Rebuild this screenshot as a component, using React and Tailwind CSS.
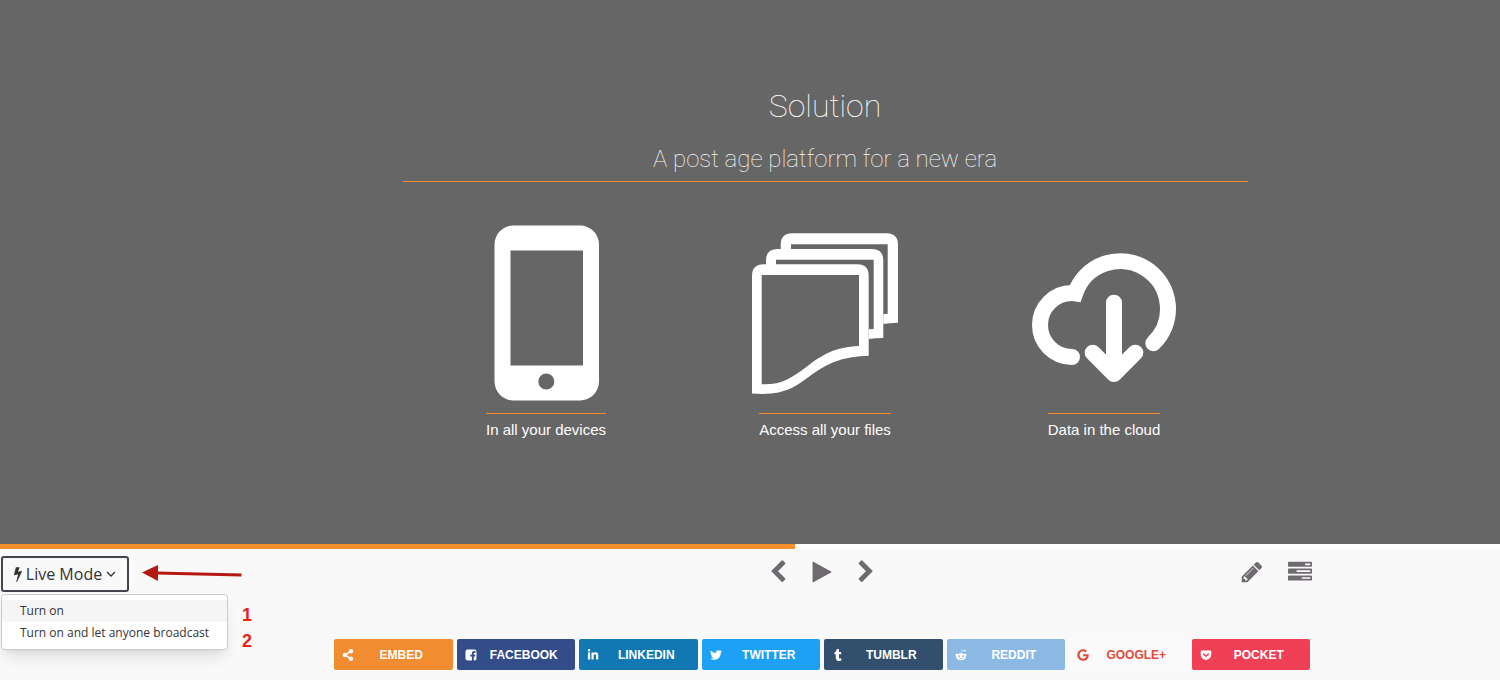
import { FaShareAlt, FaLinkedinIn, FaTwitter, FaTumblr, FaRedditAlien, FaGoogle, FaGetPocket } from "react-icons/fa";

const FacebookIcon = ({ className }) => (
  <svg viewBox="0 0 24 24" className={className} fill="currentColor" aria-hidden="true">
    <path d="M5 1h14a4 4 0 0 1 4 4v14a4 4 0 0 1-4 4h-1.500v-8h2.800l.5-3.600h-3.300V9.200c0-1.200.5-1.900 1.900-1.900h1.800V4.100c-.5-.1-1.500-.2-2.600-.2-3 0-4.800 1.800-4.800 4.700v2.800H10.500V15h3.300v8H5a4 4 0 0 1-4-4V5a4 4 0 0 1 4-4z" />
  </svg>
);

const Glyph = ({ className, d }) => (
  <svg viewBox="0 0 1792 1792" className={className} fill="currentColor" aria-hidden="true">
    <path d={d} />
  </svg>
);

const glyphs = {
  bolt: "M1333 566q18 20 7 44l-540 1157q-13 25-42 25-4 0-14-2-17-5-25.5-19t-4.5-30l197-808-406 101q-4 1-12 1-18 0-31-11-18-15-13-39l201-825q4-14 16-23t28-9h328q19 0 32 12.5t13 29.5q0 8-5 18l-171 463 396-98q8-2 12-2 19 0 34 15z",
  prev: "M1427 301l-531 531 531 531q19 19 19 45t-19 45l-166 166q-19 19-45 19t-45-19l-742-742q-19-19-19-45t19-45l742-742q19-19 45-19t45 19l166 166q19 19 19 45t-19 45z",
  next: "M1363 877l-742 742q-19 19-45 19t-45-19l-166-166q-19-19-19-45t19-45l531-531-531-531q-19-19-19-45t19-45l166-166q19-19 45-19t45 19l742 742q19 19 19 45t-19 45z",
  play: "M1576 927l-1328 738q-23 13-39.500 3t-16.500-36v-1472q0-26 16.500-36t39.500 3l1328 738q23 13 23 31t-23 31z",
  pencil: "M491 1536l91-91-235-235-91 91v107h128v128h107zm523-928q0-22-22-22-10 0-17 7l-542 542q-7 7-7 17 0 22 22 22 10 0 17-7l542-542q7-7 7-17zm-54-192l416 416-832 832h-416v-416zm683 96q0 53-37 90l-166 166-416-416 166-165q36-38 90-38 53 0 91 38l235 234q37 39 37 91z",
  tasks: "M1024 1408h640v-128h-640v128zm-384-512h1024v-128h-1024v128zm640-512h384v-128h-384v128zm512 832v256q0 26-19 45t-45 19h-1664q-26 0-45-19t-19-45v-256q0-26 19-45t45-19h1664q26 0 45 19t19 45zm0-512v256q0 26-19 45t-45 19h-1664q-26 0-45-19t-19-45v-256q0-26 19-45t45-19h1664q26 0 45 19t19 45zm0-512v256q0 26-19 45t-45 19h-1664q-26 0-45-19t-19-45v-256q0-26 19-45t45-19h1664q26 0 45 19t19 45z",
};

const PhoneDrawing = () => (
  <svg viewBox="0 0 176 176" className="size-44" aria-hidden="true">
    <path
      fill="#fff"
      fillRule="evenodd"
      d="M55.500.5h66.500a19 19 0 0 1 19 19v137a19 19 0 0 1-19 19H55.500a19 19 0 0 1-19-19v-137a19 19 0 0 1 19-19zM52.500 25.500v115h72.500v-115zM88.300 148.500a8 8 0 1 0 0 16 8 8 0 0 0 0-16z"
    />
  </svg>
);

const FilesDrawing = () => (
  <svg viewBox="0 0 176 176" className="size-44" aria-hidden="true" fill="#fff">
    <path d="M43.700 24.500V20Q43.700 8.300 55 8.300H149.500Q161 8.300 161 20V97.700Q152 98 146.300 99V89.200L150.700 88.700V19.300H54V24.500z" />
    <path d="M29 40V35.500Q29 24 40.500 24H135Q146.300 24 146.300 35.500V113Q138 113 131.700 114V104.300L136.700 104V34.700H39V40z" />
    <path
      fillRule="evenodd"
      d="M15 168.500V51Q15 39.300 26.500 39.300H120.500Q131.700 39.300 131.700 51V130.700C107 131.500 93 137 76.300 148.500C58 162 48 171 15 168.500zM24.700 159.300C45 160 54 153 68 143C86 129 98 122 122 121V50H24.700z"
    />
  </svg>
);

const CloudDrawing = () => (
  <svg viewBox="0 0 176 176" className="size-44" aria-hidden="true" fill="none" stroke="#fff" strokeWidth="16" strokeLinecap="round">
    <path d="M56 132A32 32 0 0 1 56 68Q57.500 68 59.200 68.300A47.700 47.700 0 1 1 137.300 118.300" />
    <path strokeLinejoin="round" d="M98 77.700V149M76.700 127.700L98 149L119.300 127.700" />
  </svg>
);

const features = [
  { label: "In all your devices", Drawing: PhoneDrawing },
  { label: "Access all your files", Drawing: FilesDrawing },
  { label: "Data in the cloud", Drawing: CloudDrawing },
];

const shares = [
  { label: "EMBED", Icon: FaShareAlt, color: "bg-[#f28c30] text-white" },
  { label: "FACEBOOK", Icon: FacebookIcon, color: "bg-[#334c8a] text-white" },
  { label: "LINKEDIN", Icon: FaLinkedinIn, color: "bg-[#1178b3] text-white" },
  { label: "TWITTER", Icon: FaTwitter, color: "bg-[#1da1f5] text-white" },
  { label: "TUMBLR", Icon: FaTumblr, color: "bg-[#32506d] text-white" },
  { label: "REDDIT", Icon: FaRedditAlien, color: "bg-[#8cb9e3] text-white" },
  { label: "GOOGLE+", Icon: FaGoogle, color: "bg-[#fafafa] text-[#dd4b39]" },
  { label: "POCKET", Icon: FaGetPocket, color: "bg-[#ef4056] text-white" },
];

function Slide() {
  return (
    <main className="flex flex-col items-center bg-[#666] pt-20 pb-[102px] pl-[10%] text-white">
      <div className="w-full max-w-[845px]">
        <div className="border-b border-[#f28c30] pb-1.5 text-center font-['Roboto',sans-serif] font-thin">
          <h1 className="text-[32px] leading-[53px]">Solution</h1>
          <h2 className="pt-2.5 text-2xl leading-8">A post age platform for a new era</h2>
        </div>
        <div className="grid grid-cols-3 px-1 pt-[43px]">
          {features.map(({ label, Drawing }) => (
            <div key={label} className="flex flex-col items-center">
              <Drawing />
              <p className="mt-3 border-t border-[#f28c30] pt-1 font-['Liberation_Sans',Arial,sans-serif] text-[15px] leading-6">{label}</p>
            </div>
          ))}
        </div>
      </div>
    </main>
  );
}

function LiveMode() {
  return (
    <div className="relative w-36 shrink-0 pl-px font-['Open_Sans',sans-serif] text-[#333]">
      <button className="flex h-9 w-32 items-center justify-center gap-1 rounded-[3px] border-2 border-[#47414c] text-base whitespace-nowrap">
        <Glyph className="-mx-1 size-4" d={glyphs.bolt} />
        Live Mode
        <svg viewBox="0 0 10 10" className="size-2.5" fill="none" stroke="currentColor" strokeWidth="1.300" aria-hidden="true">
          <path d="M1 3l4 4 4-4" />
        </svg>
      </button>
      <ul className="absolute top-[38px] left-px w-[227px] rounded-sm border border-[#ccc] bg-white py-[5px] text-xs leading-[22px] shadow-lg">
        <li className="bg-[#f5f5f5]">
          <button className="w-full pl-[18px] text-left">Turn on</button>
        </li>
        <li>
          <button className="w-full pl-[18px] text-left whitespace-nowrap">Turn on and let anyone broadcast</button>
        </li>
      </ul>
      <svg viewBox="0 0 100 18" className="absolute top-2 left-[142px] h-[18px] w-[100px]" aria-hidden="true">
        <path d="M14 9L99.500 11" stroke="#b51a12" strokeWidth="3" />
        <path d="M0 8.500L16 1V17z" fill="#b51a12" />
      </svg>
      <div className="absolute top-[46px] left-[242px] font-['Liberation_Sans',Arial,sans-serif] text-lg leading-[26px] font-bold text-[#e42518]">
        <div>1</div>
        <div>2</div>
      </div>
    </div>
  );
}

function Player() {
  return (
    <div className="mx-auto flex w-full max-w-[980px] flex-col">
      <div className="grid h-8 grid-cols-3 items-center text-[#6f6a70]">
        <div />
        <div className="flex items-center justify-center gap-5">
          <button aria-label="Previous"><Glyph className="size-6" d={glyphs.prev} /></button>
          <button aria-label="Play"><Glyph className="size-6" d={glyphs.play} /></button>
          <button aria-label="Next"><Glyph className="size-6" d={glyphs.next} /></button>
        </div>
        <div className="flex items-center justify-end gap-6">
          <button aria-label="Edit"><Glyph className="size-6" d={glyphs.pencil} /></button>
          <button aria-label="Slides"><Glyph className="size-6" d={glyphs.tasks} /></button>
        </div>
      </div>
      <div className="mt-[51px] grid grid-cols-8 gap-1 px-0.5">
        {shares.map(({ label, Icon, color }) => (
          <button key={label} className={`flex h-[31px] items-center rounded-xs pr-1 pl-2 font-['Liberation_Sans',Arial,sans-serif] text-xs font-bold ${color}`}>
            <Icon className="size-3" />
            <span className="flex-1 text-center">{label}</span>
          </button>
        ))}
      </div>
    </div>
  );
}

export default function App() {
  return (
    <div className="min-h-screen bg-[#f9f9f9]">
      <Slide />
      <div className="h-[5px] bg-white">
        <div className="h-full w-[53%] bg-[#f6902f]" />
      </div>
      <footer className="flex pt-[7px] pb-2">
        <LiveMode />
        <Player />
      </footer>
    </div>
  );
}
